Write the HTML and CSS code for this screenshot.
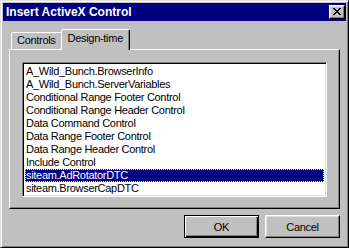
FILE: index.html
```html
<!DOCTYPE html>
<html>
<head>
<meta charset="utf-8">
<link rel="stylesheet" href="styles.css">
</head>
<body>
<div class="window">
  <div class="titlebar">
    <span class="title">Insert ActiveX Control</span>
    <button class="close" aria-label="Close">
      <svg width="8" height="7" viewBox="0 0 8 7" shape-rendering="crispEdges">
        <path d="M0 0h2v1h-2zM6 0h2v1h-2zM1 1h2v1h-2zM5 1h2v1h-2zM2 2h4v1h-4zM3 3h2v1h-2zM2 4h4v1h-4zM1 5h2v1h-2zM5 5h2v1h-2zM0 6h2v1h-2zM6 6h2v1h-2z" fill="#000"/>
      </svg>
    </button>
  </div>
  <div class="body">
    <div class="tabs">
      <div class="tab">Controls</div>
      <div class="tab active">Design-time</div>
    </div>
    <div class="panel">
      <ul class="list">
        <li>A_Wild_Bunch.BrowserInfo</li>
        <li>A_Wild_Bunch.ServerVariables</li>
        <li>Conditional Range Footer Control</li>
        <li>Conditional Range Header Control</li>
        <li>Data Command Control</li>
        <li>Data Range Footer Control</li>
        <li>Data Range Header Control</li>
        <li>Include Control</li>
        <li class="selected">siteam.AdRotatorDTC</li>
        <li>siteam.BrowserCapDTC</li>
      </ul>
    </div>
    <div class="buttons">
      <button class="btn default">OK</button>
      <button class="btn">Cancel</button>
    </div>
  </div>
</div>
</body>
</html>
```
FILE: styles.css
```css
html, body {
  margin: 0;
  padding: 0;
  background: #c0c0c0;
}
body {
  width: 349px;
  height: 248px;
  overflow: hidden;
  font-family: "Liberation Sans", Arial, sans-serif;
  font-size: 11px;
  letter-spacing: -0.3px;
  color: #000;
}
.window {
  box-sizing: border-box;
  width: 349px;
  height: 248px;
  background: #c0c0c0;
  border: 1px solid;
  border-color: #dfdfdf #000 #000 #dfdfdf;
  box-shadow: inset 1px 1px #fff, inset -1px -1px #808080;
  padding: 2px;
  display: flex;
  flex-direction: column;
}
.titlebar {
  height: 18px;
  flex: none;
  background: #000080;
  display: flex;
  align-items: center;
  justify-content: space-between;
  padding: 0 1px 0 3px;
}
.title {
  color: #fff;
  font-weight: bold;
  font-size: 12px;
  letter-spacing: 0;
  line-height: 18px;
}
.close {
  box-sizing: border-box;
  width: 16px;
  height: 14px;
  padding: 0;
  margin: 0;
  background: #c0c0c0;
  border: 1px solid;
  border-color: #fff #000 #000 #fff;
  box-shadow: inset -1px -1px #808080, inset 1px 1px #dfdfdf;
  display: flex;
  align-items: center;
  justify-content: center;
}
.close svg {
  display: block;
  margin: 0 1px 1px 0;
}
.body {
  flex: 1;
  display: flex;
  flex-direction: column;
  padding: 8px 6px 0 6px;
}
.tabs {
  display: flex;
  align-items: flex-end;
  height: 20px;
  padding-left: 2px;
}
.tab {
  box-sizing: border-box;
  height: 17px;
  padding: 0 6px 0 5px;
  border: 1px solid;
  border-bottom: 0;
  border-color: #fff #000 transparent #fff;
  border-radius: 2px 2px 0 0;
  box-shadow: inset -1px 0 #808080;
  line-height: 15px;
  background: #c0c0c0;
  white-space: nowrap;
}
.tab.active {
  height: 21px;
  margin-bottom: -1px;
  margin-left: -2px;
  padding: 1px 6px 0 6px;
  position: relative;
  z-index: 1;
}
.panel {
  box-sizing: border-box;
  height: 160px;
  border: 1px solid;
  border-color: #fff #000 #000 #fff;
  box-shadow: inset -1px -1px #808080;
  padding: 12px 12px 11px 12px;
  display: flex;
}
.list {
  flex: 1;
  box-sizing: border-box;
  margin: 0;
  padding: 2px;
  list-style: none;
  background: #fff;
  border: 1px solid;
  border-color: #808080 #fff #fff #808080;
  box-shadow: inset 1px 1px #000, inset -1px -1px #dfdfdf;
  overflow: hidden;
}
.list li {
  line-height: 13px;
  height: 13px;
  padding-left: 1px;
  white-space: nowrap;
}
.list li.selected {
  background: #000080;
  color: #fff;
  outline: 1px dotted #ffff80;
  outline-offset: -1px;
}
.buttons {
  display: flex;
  justify-content: flex-end;
  gap: 6px;
  margin-top: 6px;
}
.btn {
  box-sizing: border-box;
  width: 75px;
  height: 23px;
  padding: 0;
  margin: 0;
  font-family: "Liberation Sans", Arial, sans-serif;
  font-size: 11px;
  letter-spacing: -0.3px;
  color: #000;
  background: #c0c0c0;
  border: 1px solid;
  border-color: #fff #000 #000 #fff;
  box-shadow: inset -1px -1px #808080, inset 1px 1px #dfdfdf;
}
.btn.default {
  border-color: #000;
  box-shadow: inset 1px 1px #fff, inset -1px -1px #000, inset -2px -2px #808080;
}
```
